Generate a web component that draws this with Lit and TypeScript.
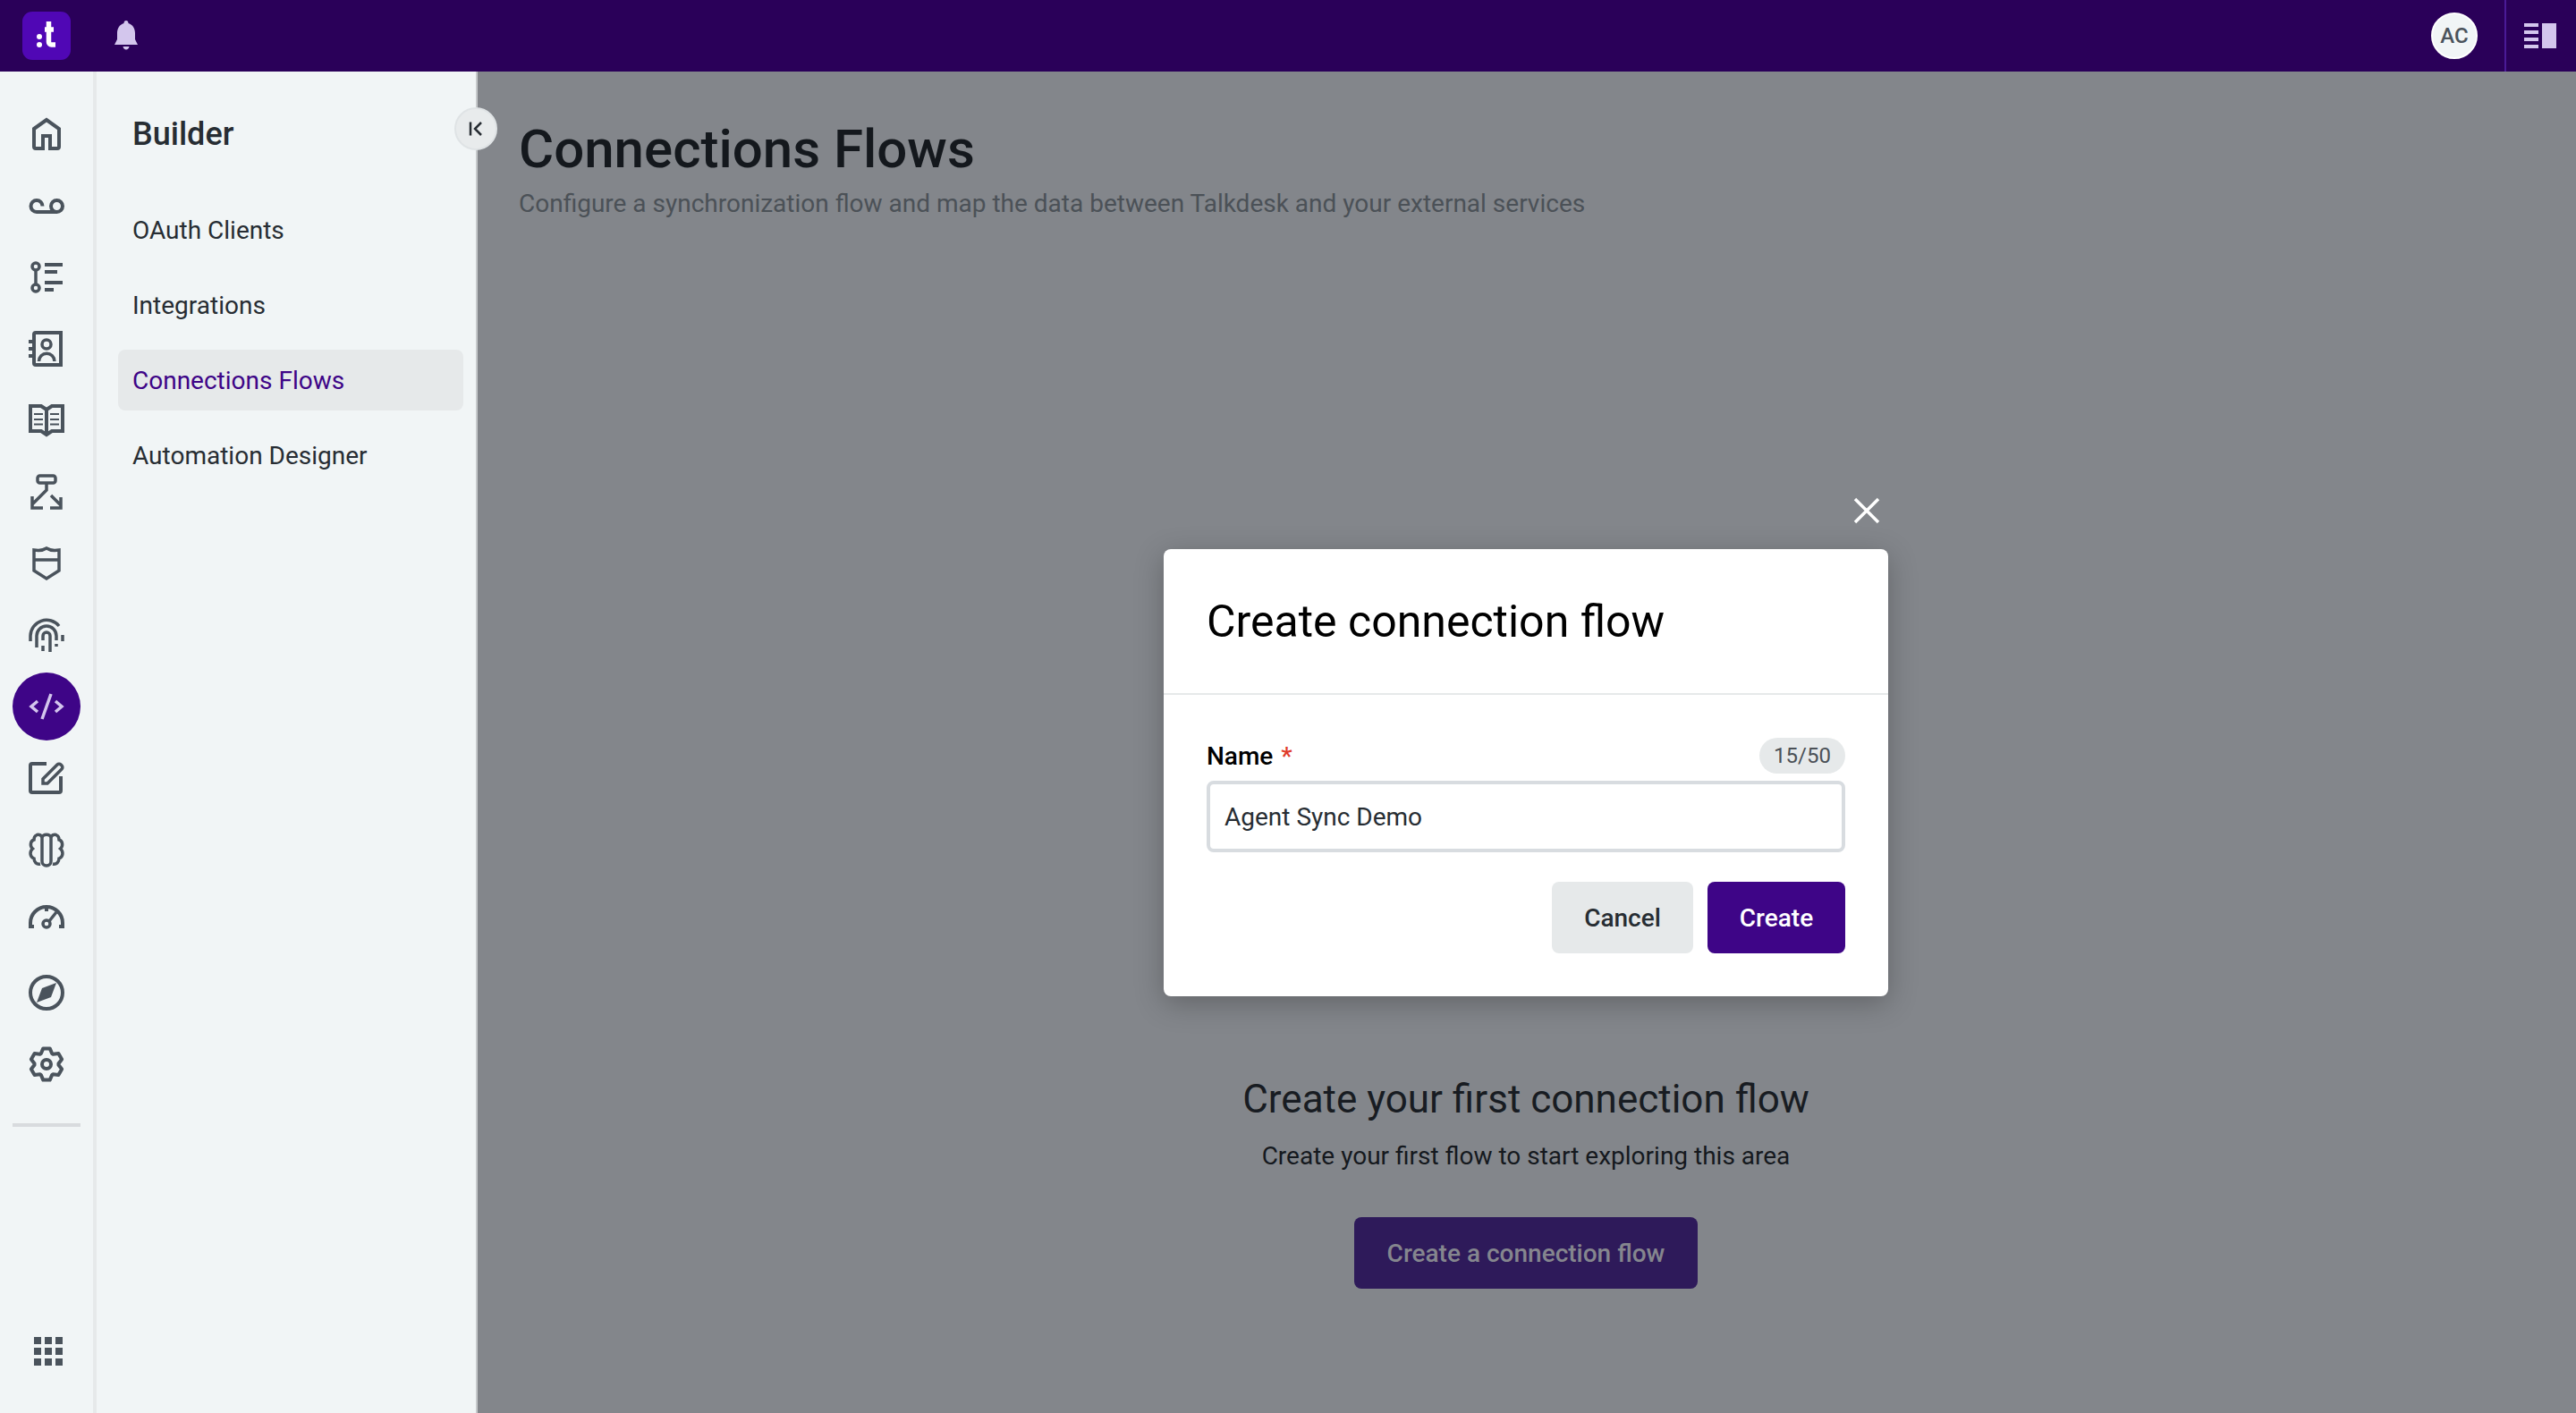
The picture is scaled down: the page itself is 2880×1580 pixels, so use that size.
import { LitElement, html, css, svg } from "lit";
import { customElement } from "lit/decorators.js";

function gearPath(): string {
  const pts: string[] = [];
  for (let i = 0; i < 6; i++) {
    const a = -90 + i * 60;
    const p = (r: number, d: number) => {
      const t = ((a + d) * Math.PI) / 180;
      return `${(24 + r * Math.cos(t)).toFixed(2)} ${(24 + r * Math.sin(t)).toFixed(2)}`;
    };
    pts.push(p(13.5, -27), p(18, -12), p(18, 12), p(13.5, 27));
  }
  return "M" + pts.join("L") + "Z";
}

const ICONS = [
  svg`<path d="M10 18 24 8l14 10v20a2 2 0 0 1-2 2h-8V26h-8v14h-8a2 2 0 0 1-2-2z"/>`,
  svg`<path d="M19.5 24.5a6.5 6.5 0 1 0-6.500 6.500h22.500a6.500 6.500 0 1 0-6.500-6.500 6.500 6.500 0 0 0 6.500 6.500"/>`,
  svg`<g stroke-width="3.500"><circle cx="12" cy="12" r="4"/><circle cx="12" cy="36" r="4"/><path d="M12 16v16"/></g><path class="solid" d="M22 8h20v4H22zM22 16h14v4H22zM22 28h20v4H22zM22 36h10v4H22z"/>`,
  svg`<path d="M12 6h28v36H12a2 2 0 0 1-2-2V8a2 2 0 0 1 2-2z"/><path class="solid" d="M4 14h8v4H4zM4 22h8v4H4zM4 30h8v4H4z"/><g stroke-width="3.500"><circle cx="24" cy="19" r="5"/><path d="M15.500 38a8.700 8.700 0 0 1 17.400 0"/></g>`,
  svg`<path d="M6 8h12l6 4 6-4h12v28H30l-6 4-6-4H6zM24 12v28"/><path stroke-width="2" d="M10 17h10M10 23h10M10 28.500h10M28 17h10M28 23h10M28 28.500h10"/>`,
  svg`<g stroke-width="3.500"><rect x="14" y="6" width="20" height="8" rx="2.500"/><path d="M24 14v8L8 38M8 29v13h12M29 28l11 11M40 30v12H28"/></g>`,
  svg`<path stroke-width="3.500" d="M10 9c6 1 11 0 14-2 3 2 8 3 14 2v23l-14 9-14-9zM10 20h28"/>`,
  svg`<g stroke-width="3.500"><path d="M6 31v-6A18 18 0 0 1 38 14M42 24v7M13 38V25a11 11 0 0 1 22 0v5M35 34v3M20 42v-6M20 30v-5a4 4 0 0 1 8 0v18"/></g>`,
  svg`<path class="on" d="M14 18l-7 6 7 6M34 18l7 6-7 6M29 10l-10 28"/>`,
  svg`<path d="M24 8H8a2 2 0 0 0-2 2v28a2 2 0 0 0 2 2h30a2 2 0 0 0 2-2V22"/><path stroke-width="3.500" d="M20 30v-5L36 9a2.800 2.800 0 0 1 4 0l1 1a2.800 2.800 0 0 1 0 4L25 30z"/>`,
  svg`<path stroke-width="3.500" d="M19 11v26a5 5 0 0 0 10 0V11M19 11c0-5 10-5 10 0M19 11c0-3-4-5-6.500-3C10 9 10 11 10 13c-4 1-5 7-1.500 10C5 26 5 32 10 34c0 4 3 7 7 6M29 11c0-3 4-5 6.500-3C38 9 38 11 38 13c4 1 5 7 1.500 10 3.500 3 3.500 9-1.500 11 0 4-3 7-7 6"/>`,
  svg`<path d="M10 30H6v-4a18 18 0 0 1 36 0v4h-4M24 7v6"/><g stroke-width="3.500"><circle cx="24" cy="27" r="4"/><path d="M27 24l8-10"/></g>`,
  svg`<circle cx="24" cy="24" r="18"/><path class="solid" d="M35 13l-6 16-16 6 6-16z"/>`,
  svg`<path stroke-linejoin="round" d="${gearPath()}"/><circle cx="24" cy="24" r="5"/>`,
];

const NAV = ["OAuth Clients", "Integrations", "Connections Flows", "Automation Designer"];

@customElement("app-root")
export class AppRoot extends LitElement {
  static styles = css`
    :host { display: flex; flex-direction: column; width: 100%; height: 100vh; overflow: hidden; font-family: Roboto, "Liberation Sans", sans-serif; color: #272d33; }
    * { box-sizing: border-box; }
    .top { flex: none; height: 80px; background: #2a0059; display: flex; align-items: center; }
    .logo { margin-left: 25px; width: 54px; height: 54px; display: block; }
    .bell { margin-left: 48px; width: 28px; height: 34px; display: block; fill: #d3c6ed; }
    .avatar { margin-left: auto; width: 52px; height: 52px; border-radius: 50%; background: #f1f5f6; border: 2px solid #fff; display: flex; align-items: center; justify-content: center; font-size: 24px; font-weight: 500; color: #4a535c; }
    .panel { margin-left: 30px; width: 80px; height: 80px; border-left: 2px solid #4a1a96; display: flex; align-items: center; padding-left: 20px; gap: 4px; }
    .lines { display: grid; gap: 4px; width: 16px; }
    .lines i { display: block; height: 4px; background: #d3c6ed; }
    .block { width: 16px; height: 28px; background: #d3c6ed; }
    .body { flex: 1; display: flex; min-height: 0; }
    .rail { flex: none; width: 108px; background: #f1f5f6; border-right: 4px solid #e6e9ea; display: flex; flex-direction: column; align-items: center; padding: 30px 0 53px; }
    .item { flex: none; width: 80px; height: 80px; display: flex; align-items: center; justify-content: center; }
    .item.active span { width: 76px; height: 76px; border-radius: 50%; background: #3e0587; display: flex; align-items: center; justify-content: center; }
    .ico { display: block; width: 48px; height: 48px; fill: none; stroke: #4a535c; stroke-width: 4; }
    .ico .solid { fill: #4a535c; stroke: none; }
    .ico .on { stroke: #d3c6ed; stroke-width: 3.5px; }
    .rule { flex: none; width: 76px; height: 4px; background: #d8dbde; margin-top: 26px; }
    .apps { margin-top: auto; margin-left: 4px; display: grid; grid-template-columns: repeat(3, 8px); gap: 4px; }
    .apps i { display: block; height: 8px; background: #4a535c; }
    .side { flex: none; width: 426px; position: relative; background: #f1f5f6; border-right: 2px solid #c6c9cb; padding: 0 14px 0 24px; z-index: 2; }
    .side h2 { margin: 0 0 0 16px; padding-top: 48px; height: 136px; font-size: 36px; line-height: 44px; font-weight: 500; color: #272d33; }
    .nav { display: flex; flex-direction: column; gap: 16px; margin-top: 7px; }
    .nav div { height: 68px; padding-left: 16px; border-radius: 8px; display: flex; align-items: center; font-size: 28px; color: #272d33; }
    .nav div.active { background: #e6e9ea; color: #3e0587; }
    .collapse { position: absolute; right: -24px; top: 40px; width: 48px; height: 48px; border-radius: 50%; background: #e8ebec; border: 2px solid #dfe3e5; display: flex; align-items: center; justify-content: center; }
    .collapse svg { display: block; width: 24px; height: 24px; fill: none; stroke: #272d33; stroke-width: 2.5; }
    .main { flex: 1; position: relative; background: #83868b; padding: 51px 0 0 46px; display: flex; flex-direction: column; min-width: 0; }
    .main h1 { margin: 0; font-size: 60px; line-height: 72px; font-weight: 500; color: #14181d; }
    .lead { margin: 5px 0 0; font-size: 28px; line-height: 40px; color: #4b5157; }
    .hero { margin: 951px 48px 0 0; display: flex; flex-direction: column; align-items: center; }
    .hero h3 { margin: 0; font-size: 44px; line-height: 60px; font-weight: 400; color: #181c22; }
    .hero p { margin: 14px 0 48px; font-size: 28px; line-height: 40px; color: #15191e; }
    .hero div { width: 384px; height: 80px; background: #2e1a5a; color: #85868e; border-radius: 8px; display: flex; align-items: center; justify-content: center; font-size: 28px; font-weight: 500; }
    .overlay { position: absolute; inset: 0 2px 0 0; display: flex; align-items: center; justify-content: center; }
    .dialog { width: 810px; }
    .close { height: 68px; padding: 9px 8px 0 0; display: flex; justify-content: flex-end; }
    .close svg { display: block; width: 32px; height: 32px; fill: none; stroke: #fff; stroke-width: 3.5; }
    .card { background: #fff; border-radius: 8px; box-shadow: 0 8px 32px rgba(0, 0, 0, 0.25); }
    .head { height: 163px; border-bottom: 2px solid #e6e9ea; padding: 0 48px; display: flex; align-items: center; font-size: 50px; color: #000; }
    .form { padding: 48px; }
    .label { display: flex; justify-content: space-between; align-items: center; height: 40px; font-size: 28px; font-weight: 500; color: #000; }
    .label b { font-weight: 500; color: #e03a2a; margin-left: 2px; }
    .count { width: 96px; height: 40px; border-radius: 20px; background: #e6e9ea; display: flex; align-items: center; justify-content: center; font-size: 24px; font-weight: 400; color: #4b5157; }
    .input { margin-top: 8px; height: 80px; border: 4px solid #d8dce0; border-radius: 8px; padding-left: 16px; display: flex; align-items: center; font-size: 28px; color: #272d33; }
    .actions { margin-top: 33px; display: flex; justify-content: flex-end; gap: 16px; }
    .btn { height: 80px; border-radius: 8px; display: flex; align-items: center; justify-content: center; font-size: 28px; font-weight: 500; }
    .cancel { width: 158px; background: #e6e9ea; color: #272d33; }
    .create { width: 154px; background: #3e0587; color: #fff; }
  `;

  render() {
    return html`
      <div class="top">
        <svg class="logo" viewBox="0 0 54 54">
          <rect width="54" height="54" rx="11" fill="#5007b5"/>
          <circle cx="19" cy="28" r="3" fill="#fff"/><circle cx="19" cy="37" r="3" fill="#fff"/>
          <path d="M29.500 11v23a3 3 0 0 0 3 3H37M25 20h10" fill="none" stroke="#fff" stroke-width="5.500"/>
        </svg>
        <svg class="bell" viewBox="0 0 28 34">
          <path d="M14 0c1.500 0 2.500 1 2.500 3C21.500 4.500 24 9 24 14v7l3 6H1l3-6v-7C4 9 6.500 4.500 11.500 3c0-2 1-3 2.500-3z"/>
          <path d="M10.500 29h7c-.5 4.500-6.500 4.500-7 0z"/>
        </svg>
        <div class="avatar">AC</div>
        <div class="panel">
          <div class="lines"><i></i><i></i><i></i><i></i></div>
          <div class="block"></div>
        </div>
      </div>
      <div class="body">
        <div class="rail">
          ${ICONS.map(
            (ic, i) => html`<div class="item ${i === 8 ? "active" : ""}"><span><svg class="ico" viewBox="0 0 48 48">${ic}</svg></span></div>`
          )}
          <div class="rule"></div>
          <div class="apps">${Array.from({ length: 9 }, () => html`<i></i>`)}</div>
        </div>
        <div class="side">
          <h2>Builder</h2>
          <div class="nav">
            ${NAV.map((n) => html`<div class="${n === "Connections Flows" ? "active" : ""}">${n}</div>`)}
          </div>
          <div class="collapse">
            <svg viewBox="0 0 24 24"><path d="M6 4.500v15M18 5l-7 7 7 7"/></svg>
          </div>
        </div>
        <div class="main">
          <h1>Connections Flows</h1>
          <p class="lead">Configure a synchronization flow and map the data between Talkdesk and your external services</p>
          <div class="hero">
            <h3>Create your first connection flow</h3>
            <p>Create your first flow to start exploring this area</p>
            <div>Create a connection flow</div>
          </div>
          <div class="overlay">
            <div class="dialog">
              <div class="close"><svg viewBox="0 0 32 32"><path d="M3 3l26 26M29 3 3 29"/></svg></div>
              <div class="card">
                <div class="head">Create connection flow</div>
                <div class="form">
                  <div class="label"><span>Name <b>*</b></span><span class="count">15/50</span></div>
                  <div class="input">Agent Sync Demo</div>
                  <div class="actions">
                    <div class="btn cancel">Cancel</div>
                    <div class="btn create">Create</div>
                  </div>
                </div>
              </div>
            </div>
          </div>
        </div>
      </div>
    `;
  }
}
